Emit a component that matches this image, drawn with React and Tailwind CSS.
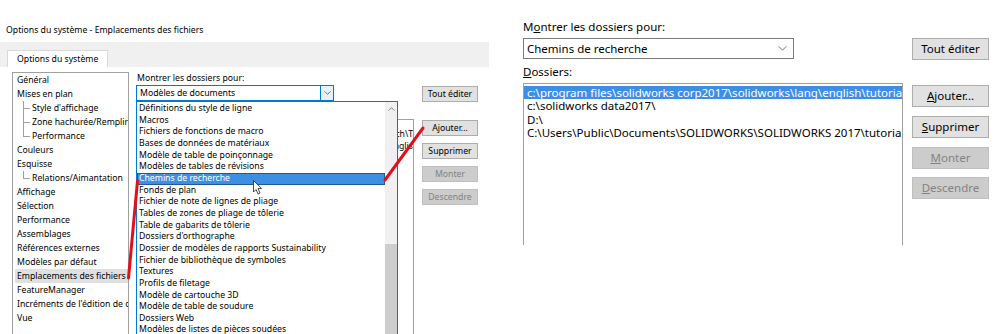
import React from "react";

const treeItems = [
  { t: "Général" },
  { t: "Mises en plan" },
  { t: "Style d'affichage", child: true },
  { t: "Zone hachurée/Remplir", child: true },
  { t: "Performance", child: true, last: true },
  { t: "Couleurs" },
  { t: "Esquisse" },
  { t: "Relations/Aimantation", child: true, last: true },
  { t: "Affichage" },
  { t: "Sélection" },
  { t: "Performance" },
  { t: "Assemblages" },
  { t: "Références externes" },
  { t: "Modèles par défaut" },
  { t: "Emplacements des fichiers", sel: true },
  { t: "FeatureManager" },
  { t: "Incréments de l'édition de cotes" },
  { t: "Vue" },
];

const dropItems = [
  "Définitions du style de ligne",
  "Macros",
  "Fichiers de fonctions de macro",
  "Bases de données de matériaux",
  "Modèle de table de poinçonnage",
  "Modèles de tables de révisions",
  "Chemins de recherche",
  "Fonds de plan",
  "Fichier de note de lignes de pliage",
  "Tables de zones de pliage de tôlerie",
  "Table de gabarits de tôlerie",
  "Dossiers d'orthographe",
  "Dossier de modèles de rapports Sustainability",
  "Fichier de bibliothèque de symboles",
  "Textures",
  "Profils de filetage",
  "Modèle de cartouche 3D",
  "Modèle de table de soudure",
  "Dossiers Web",
  "Modèles de listes de pièces soudées",
];

const paths = [
  "c:\\program files\\solidworks corp2017\\solidworks\\lang\\english\\tutorial",
  "c:\\solidworks data2017\\",
  "D:\\",
  "C:\\Users\\Public\\Documents\\SOLIDWORKS\\SOLIDWORKS 2017\\tutorial",
];

// small button of the scaled-down dialog
const SmallBtn = ({ children, disabled, className = "" }) => (
  <div
    className={`h-[16px] w-[56px] flex items-center justify-center border text-[8.7px] leading-none ${
      disabled
        ? "bg-[#cccccc] border-[#bfbfbf] text-[#838383]"
        : "bg-[#e1e1e1] border-[#adadad] text-black"
    } ${className}`}
  >
    {children}
  </div>
);

const BigBtn = ({ children, disabled, className = "" }) => (
  <div
    className={`h-[22px] w-[77px] flex items-center justify-center border text-[11.5px] leading-none ${
      disabled
        ? "bg-[#cccccc] border-[#bfbfbf] text-[#838383]"
        : "bg-[#e1e1e1] border-[#adadad] text-black"
    } ${className}`}
  >
    {children}
  </div>
);

const Chevron = ({ className }) => (
  <svg className={className} viewBox="0 0 10 6" fill="none" stroke="currentColor" strokeWidth="1">
    <path d="M0.5 0.5 L5 5 L9.5 0.5" />
  </svg>
);

export default function App() {
  return (
    <div className="relative w-[1004px] h-[334px] overflow-hidden bg-white flex font-['Noto_Sans',sans-serif] text-black">
      {/* Left: old dialog */}
      <div className="w-[489px] flex flex-col shrink-0">
        <div className="shrink-0 h-[42px] pt-[23px] pl-[6px] text-[8.7px] leading-[14px] whitespace-nowrap">
          Options du système - Emplacements des fichiers
        </div>
        <div className="shrink-0 h-[25px] bg-[#f0f0f0] flex items-end pl-[7px]">
          <div className="h-[17px] px-[9px] bg-white border-l border-t border-r border-[#d9d9d9] text-[8.7px] leading-[16px] whitespace-nowrap">
            Options du système
          </div>
        </div>
        <div className="flex-1 min-h-0 flex items-start">
          {/* tree */}
          <div className="shrink-0 ml-[12px] mt-[5px] w-[117px] h-[300px] border border-[#a0a0a0] overflow-hidden text-[8.7px]">
            {treeItems.map((it, i) => (
              <div key={i} className="relative h-[14px] leading-[14px] whitespace-nowrap">
                {it.child && (
                  <>
                    <div
                      className={`absolute left-[10px] top-0 w-px bg-[#a0a0a0] ${it.last ? "h-[7px]" : "h-[14px]"}`}
                    />
                    <div className="absolute left-[10px] top-[7px] h-px w-[7px] bg-[#a0a0a0]" />
                  </>
                )}
                <span
                  className={`${it.child ? "ml-[19px]" : "ml-[2px] pl-[2px]"} ${
                    it.sel ? "bg-[#e0e0e0] pr-[4px] inline-block" : ""
                  }`}
                >
                  {it.t}
                </span>
              </div>
            ))}
          </div>

          {/* middle column */}
          <div className="shrink-0 relative ml-[7px] w-[278px] pt-[4px] text-[8.7px]">
            <div className="leading-[14px] pl-[1px]">Montrer les dossiers pour:</div>
            <div className="w-[198px] h-[16px] border border-[#0078d7] flex items-center">
              <div className="flex-1 pl-[3px] leading-none">Modèles de documents</div>
              <div className="w-[13px] h-full bg-[#e5f1fb] border-l border-[#0078d7] flex items-center justify-center text-[#333]">
                <Chevron className="w-[7px] h-[4px]" />
              </div>
            </div>
            {/* folders list, mostly hidden behind the open dropdown */}
            <div className="mt-[18px] w-[278px] h-[220px] border border-[#a0a0a0] pt-[8px] overflow-hidden">
              <div className="h-[12px] leading-[12px] flex justify-end">
                <span className="shrink-0 whitespace-nowrap">
                  C:\ProgramData\SOLIDWORKS\SOLIDWORKS 2017\templates\research\T
                </span>
              </div>
              <div className="h-[12px] leading-[12px] flex justify-end">
                <span className="shrink-0 whitespace-nowrap">C:\ProgramData\SOLIDWORKS\lang\englis</span>
              </div>
            </div>

            {/* open dropdown */}
            <div className="absolute left-0 top-[34px] w-[262px] h-[240px] bg-white border border-[#0078d7] flex">
              <div className="flex-1 pt-[1px]">
                {dropItems.map((d, i) => (
                  <div
                    key={i}
                    className={`h-[11.67px] leading-[11.67px] pl-[2px] whitespace-nowrap ${
                      i === 6 ? "bg-[#3d8fe4] text-white outline outline-1 outline-[#1c5a9a] -outline-offset-1" : ""
                    }`}
                  >
                    {d}
                  </div>
                ))}
              </div>
              <div className="w-[12px] bg-[#f0f0f0] flex flex-col items-center">
                <Chevron className="w-[7px] h-[4px] mt-[5px] rotate-180 text-[#505050]" />
                <div className="mt-[133px] w-full flex-1 bg-[#cdcdcd]" />
              </div>
            </div>
          </div>

          {/* buttons */}
          <div className="shrink-0 ml-[8px] mt-[19px] flex flex-col">
            <SmallBtn>Tout éditer</SmallBtn>
            <SmallBtn className="mt-[18px]">Ajouter...</SmallBtn>
            <SmallBtn className="mt-[7px]">Supprimer</SmallBtn>
            <SmallBtn disabled className="mt-[7px]">Monter</SmallBtn>
            <SmallBtn disabled className="mt-[7px]">Descendre</SmallBtn>
          </div>
        </div>
      </div>

      {/* Right: new dialog */}
      <div className="flex-1 pl-[34px] flex items-start text-[11.5px]">
        <div className="w-[380px] pt-[19px]">
          <div className="leading-[16px]">
            M<span className="underline">o</span>ntrer les dossiers pour:
          </div>
          <div className="mt-[3px] w-[271px] h-[21px] border border-[#7a7a7a] flex items-center pl-[3px] pr-[6px]">
            <div className="flex-1 leading-none">Chemins de recherche</div>
            <Chevron className="w-[9px] h-[5px] text-[#555]" />
          </div>
          <div className="mt-[5px] leading-[16px]">
            <span className="underline">D</span>ossiers:
          </div>
          <div className="mt-[3px] h-[162px] border-l border-t border-r border-[#a0a0a0] pt-[2px] overflow-hidden">
            {paths.map((p, i) => (
              <div
                key={i}
                className={`h-[13.3px] leading-[13.3px] pl-[3px] whitespace-nowrap ${
                  i === 0 ? "bg-[#3d8fe4] text-white" : ""
                }`}
              >
                {p}
              </div>
            ))}
          </div>
        </div>
        <div className="ml-[9px] pt-[38px] flex flex-col">
          <BigBtn>Tout éditer</BigBtn>
          <BigBtn className="mt-[25px]">
            <span className="underline">A</span>jouter...
          </BigBtn>
          <BigBtn className="mt-[9px]">
            <span className="underline">S</span>upprimer
          </BigBtn>
          <BigBtn disabled className="mt-[9px]">
            <span className="underline">M</span>onter
          </BigBtn>
          <BigBtn disabled className="mt-[8px]">
            <span className="underline">D</span>escendre
          </BigBtn>
        </div>
      </div>

      {/* annotations: red strokes and mouse cursor */}
      <svg className="absolute inset-0 pointer-events-none" width="1004" height="334">
        <path d="M385 180 L423 128" stroke="#e3101c" strokeWidth="3" strokeLinecap="round" fill="none" />
        <path d="M137.5 181 L128.5 278" stroke="#e3101c" strokeWidth="3" strokeLinecap="round" fill="none" />
        <path
          d="M253.5 180.5 L253.5 192 L256 189.5 L258 194 L260 193 L258 188.5 L261.5 188.5 Z"
          fill="white"
          stroke="#333"
          strokeWidth="0.9"
          strokeLinejoin="round"
        />
      </svg>
    </div>
  );
}
